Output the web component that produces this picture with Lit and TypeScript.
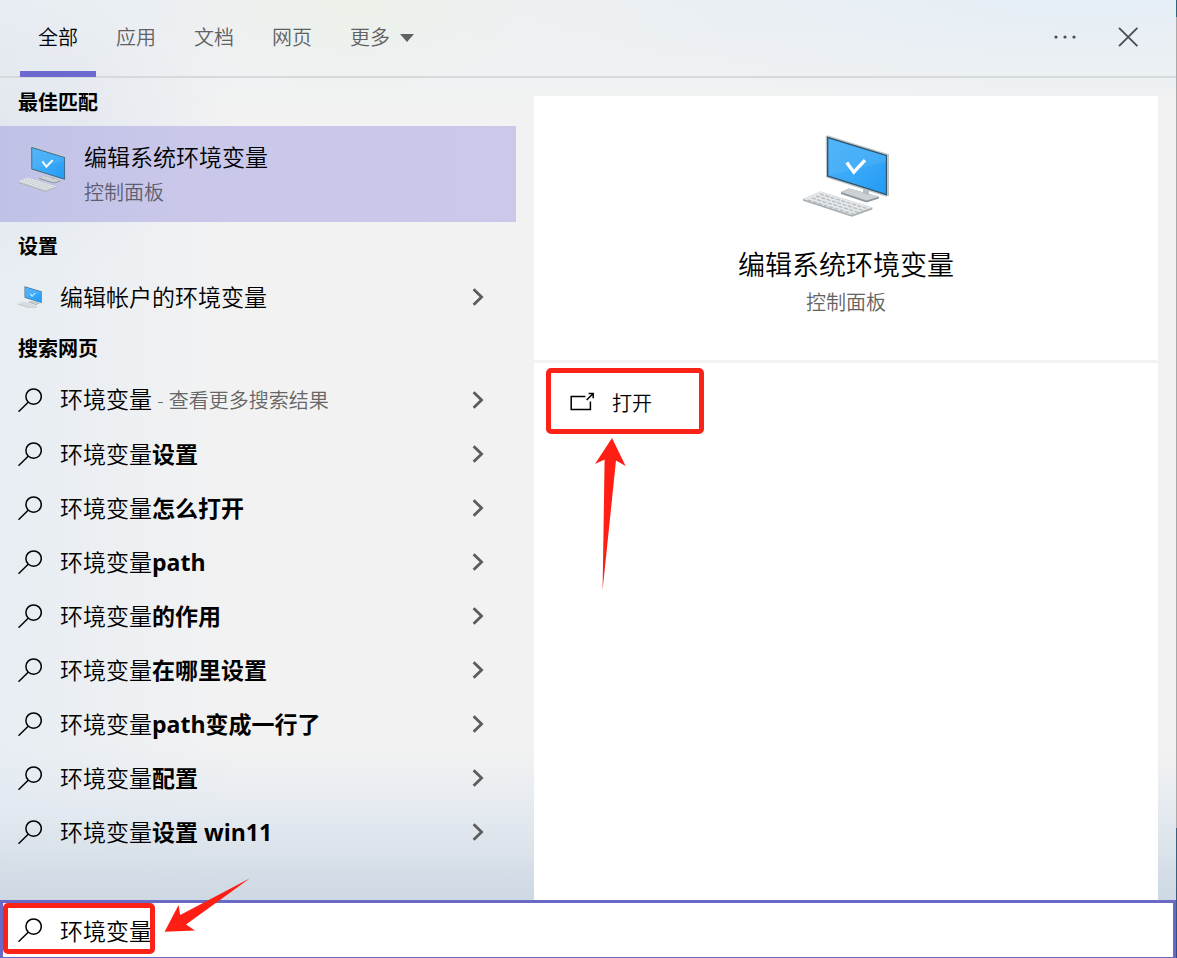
import { LitElement, html, css, svg, nothing } from "lit";
import { customElement, property, state } from "lit/decorators.js";

const magnifier = html`<svg class="magnifier" viewBox="0 0 24 24" aria-hidden="true">
  <circle cx="15.6" cy="8.6" r="7.7" />
  <path d="M10.2 14.2L.5 23.7" />
</svg>`;

const chevron = html`<svg class="chevron" viewBox="0 0 12 18" aria-hidden="true">
  <path d="M1.6 1.2L9.6 9L1.6 16.8" />
</svg>`;

@customElement("computer-icon")
class ComputerIcon extends LitElement {
  static styles = css`
    :host { display: block; }
    svg { display: block; width: 100%; height: auto; }
  `;
  render() {
    const keys = [];
    for (let row = 0; row < 4; row++) {
      const x = 17 - row * 4.1;
      const y = 59 + row * 2;
      keys.push(svg`<path d="M${x} ${y}l48.5 15" stroke="#b2b8bc" stroke-width="1.2" stroke-dasharray="4 1.6" />`);
    }
    return html`<svg viewBox="0 0 86 82" aria-hidden="true">
      <defs>
        <linearGradient id="glass" x1="0" y1="0" x2="1" y2="1">
          <stop offset="0" stop-color="#45b0f8" />
          <stop offset=".55" stop-color="#38a8f8" />
          <stop offset="1" stop-color="#229af4" />
        </linearGradient>
      </defs>
      <path d="M38 57L46 53.4L76 61.8V63.4L63.5 67.4L38 59Z" fill="#8e979d" />
      <path d="M38 57L46 53.4L76 61.8L63.5 65.6Z" fill="#cbd1d5" />
      <path d="M60 52L66 54V60L60 58.5Z" fill="#b7bec3" />
      <path d="M22.7 1.2L24.4 .2L86 19.2V61L82.8 61.4L23 42.6Z" fill="#bcc5ca" />
      <path d="M24 1.6L84 20V60.4L24 41.6Z" fill="#33566d" />
      <path d="M25.4 3.4L82.8 21V58.8L25.4 40.6Z" fill="url(#glass)" />
      <path d="M25.4 3.4L82.8 21V27L25.4 40.6Z" fill="#fff" opacity=".07" />
      <path d="M43.8 27.6L50.8 37.2L62 25.2" fill="none" stroke="#fff" stroke-width="3.4" />
      <path d="M0 64L17.4 56.4L69.4 72.6V74.4L48.8 81.8L0 65.8Z" fill="#a9aeb2" />
      <path d="M0 64L17.4 56.4L69.4 72.6L48.8 80Z" fill="#e4e7e9" />
      <g fill="none">${keys}</g>
    </svg>`;
  }
}

@customElement("result-row")
class ResultRow extends LitElement {
  @property() base = "";
  @property() bold = "";
  @property() hint = "";
  @property() icon = "search";

  static styles = css`
    :host { display: block; }
    .row {
      display: flex;
      align-items: center;
      gap: 18px;
      width: 100%;
      height: 54px;
      padding: 0 32px 0 18px;
      border: 0;
      background: none;
      color: #000;
      font: inherit;
      text-align: left;
      cursor: pointer;
    }
    .row:hover { background: rgba(120, 120, 200, 0.1); }
    .with-hint { height: 55px; }
    .label {
      flex: 1;
      min-width: 0;
      font-size: 23px;
      line-height: 32px;
      white-space: nowrap;
      overflow: hidden;
      text-overflow: ellipsis;
    }
    .bold { font-weight: 700; }
    .hint { font-size: 20px; color: #666; }
    .device { width: 24px; flex: none; }
    .magnifier { width: 24px; height: 24px; flex: none; fill: none; stroke: #000; stroke-width: 1.5; }
    .chevron { width: 12px; height: 18px; flex: none; fill: none; stroke: #5c5c5c; stroke-width: 2.8; }
  `;

  render() {
    return html`<button class="row ${this.hint ? "with-hint" : ""}">
      ${this.icon === "computer" ? html`<computer-icon class="device"></computer-icon>` : magnifier}
      <span class="label">${this.base}${this.bold
        ? html`<b class="bold">${this.bold}</b>`
        : nothing}${this.hint ? html`<span class="hint"> - ${this.hint}</span>` : nothing}</span>
      ${chevron}
    </button>`;
  }
}

@customElement("app-root")
class AppRoot extends LitElement {
  @state() private tab = "全部";
  @state() private query = "环境变量";

  private tabs = ["全部", "应用", "文档", "网页", "更多"];
  private suggestions = [
    { bold: "", hint: "查看更多搜索结果" },
    { bold: "设置" },
    { bold: "怎么打开" },
    { bold: "path" },
    { bold: "的作用" },
    { bold: "在哪里设置" },
    { bold: "path变成一行了" },
    { bold: "配置" },
    { bold: "设置 win11" },
  ];

  static styles = css`
    :host {
      display: block;
      box-sizing: border-box;
      min-height: 100vh;
      padding-right: 1px;
      background: linear-gradient(#2c6580 0 17px, #a9a9a9 17px 828px, #38607c 828px 880px, #2a4a8c);
      font-family: "Open Sans", "Noto Sans CJK SC", sans-serif;
      font-weight: 350;
      color: #000;
    }
    *, *::before { box-sizing: border-box; }
    button { font-family: inherit; font-weight: inherit; }
    .window {
      display: grid;
      grid-template-rows: auto 1fr auto;
      min-height: 100vh;
      background:
        linear-gradient(to bottom, rgba(226, 232, 240, 0) 78%, rgba(226, 232, 240, 0.85) 85%, #cdd8e2 94%),
        radial-gradient(ellipse 200px 90px at 30% 0, rgba(236, 242, 232, 0.8), rgba(236, 242, 232, 0)),
        radial-gradient(ellipse 560px 110px at 92% 0, #e5eef6, rgba(229, 238, 246, 0)),
        radial-gradient(ellipse 220px 140px at 0 14%, #e3e6ee, rgba(227, 230, 238, 0)),
        linear-gradient(to right, #e7edf3, rgba(241, 242, 243, 0) 20%),
        linear-gradient(#edf0f2, #f2f2f2 14%);
    }
    .header {
      display: flex;
      justify-content: space-between;
      height: 78px;
      padding: 0 26px 0 20px;
      border-bottom: 2px solid #d6dadb;
    }
    .tabs { display: flex; gap: 2px; }
    .tab {
      position: relative;
      display: flex;
      align-items: center;
      gap: 10px;
      padding: 0 18px;
      border: 0;
      background: none;
      color: #5f6163;
      font-size: 20px;
      line-height: 28px;
      cursor: pointer;
    }
    .selected { color: #000; }
    .selected::before {
      content: "";
      position: absolute;
      left: 0;
      right: 0;
      bottom: -1px;
      height: 6px;
      background: #6b69cf;
    }
    .caret { width: 14px; height: 8px; fill: #5f6163; }
    .tools { display: flex; align-items: center; gap: 29px; padding-bottom: 2px; }
    .tool { display: flex; padding: 0; border: 0; background: none; cursor: pointer; }
    .dots { width: 24px; height: 24px; fill: #4a4d50; }
    .cross { width: 44px; height: 24px; fill: none; stroke: #4a4d50; stroke-width: 1.8; }

    .content {
      display: grid;
      grid-template-columns: 43fr 52fr;
      gap: 18px;
      padding-right: 18px;
    }
    .results { min-width: 0; }
    .heading {
      margin: 0;
      padding: 11px 18px 9px;
      font-size: 20px;
      line-height: 28px;
      font-weight: 700;
    }
    .best {
      display: flex;
      align-items: center;
      gap: 18px;
      width: 100%;
      height: 96px;
      padding: 2px 18px 0;
      border: 0;
      background: linear-gradient(to right, #c0c1e7, #c9c8ea 35%, #cbc9ea);
      text-align: left;
      cursor: pointer;
    }
    .best-icon { width: 48px; padding-bottom: 12px; }
    .best-text { display: flex; flex-direction: column; }
    .best-title { font-size: 23px; line-height: 35px; }
    .sub { margin: 0; font-size: 20px; line-height: 36px; color: #636363; }
    .best .sub { color: #5f5e70; }

    .details { margin-top: 18px; background: #fff; min-width: 0; }
    .summary {
      display: flex;
      flex-direction: column;
      align-items: center;
      padding: 39px 20px;
      border-bottom: 3px solid #f2f2f2;
    }
    .summary-icon { width: 86px; margin-bottom: 28px; }
    .name { margin: 0; font-size: 27px; line-height: 40px; font-weight: inherit; }
    .actions { padding: 8px 12px; }
    .action { position: relative; width: 158px; }
    .open {
      display: flex;
      align-items: center;
      gap: 18px;
      width: 100%;
      height: 66px;
      padding: 0 24px;
      border: 0;
      background: none;
      color: #000;
      font-size: 20px;
      line-height: 28px;
      cursor: pointer;
    }
    .open-icon { width: 24px; height: 24px; flex: none; fill: none; stroke: #000; stroke-width: 1.5; }

    .search {
      position: relative;
      display: flex;
      align-items: center;
      gap: 18px;
      height: 58px;
      padding: 0 15px;
      border: solid #6b69c6;
      border-width: 3px 3px 1px;
      background: #fff;
    }
    .field {
      flex: 1;
      min-width: 0;
      height: 40px;
      padding: 0;
      border: 0;
      outline: 0;
      background: none;
      color: #000;
      font-family: inherit;
      font-weight: inherit;
      font-size: 23px;
    }
    .magnifier { width: 24px; height: 24px; flex: none; fill: none; stroke: #000; stroke-width: 1.5; }

    .frame {
      position: absolute;
      border: 5px solid #fb2318;
      border-radius: 5px;
      pointer-events: none;
    }
    .frame-open { inset: -3px 0 3px 0; }
    .frame-search { left: 0; top: 0; width: 152px; height: 51px; }
    .arrow { position: absolute; fill: #ff1e14; pointer-events: none; }
    .arrow-open { left: 48px; top: 67px; width: 34px; height: 153px; }
    .arrow-search { left: 161px; top: -25px; width: 87px; height: 54px; }
  `;

  private onInput(e: Event) {
    this.query = (e.target as HTMLInputElement).value;
  }

  render() {
    return html`<div class="window">
      <header class="header">
        <nav class="tabs">
          ${this.tabs.map(
            (name) => html`<button class="tab ${name === this.tab ? "selected" : ""}" @click=${() => (this.tab = name)}>
              ${name}${name === "更多"
                ? html`<svg class="caret" viewBox="0 0 14 8" aria-hidden="true"><path d="M0 0H14L7 8Z" /></svg>`
                : nothing}
            </button>`
          )}
        </nav>
        <div class="tools">
          <button class="tool" aria-label="选项">
            <svg class="dots" viewBox="0 0 24 24">
              <circle cx="3" cy="12" r="1.6" /><circle cx="12" cy="12" r="1.6" /><circle cx="21" cy="12" r="1.6" />
            </svg>
          </button>
          <button class="tool" aria-label="关闭">
            <svg class="cross" viewBox="0 0 44 24"><path d="M13 2.8L31.4 21.2M31.4 2.8L13 21.2" /></svg>
          </button>
        </div>
      </header>

      <main class="content">
        <section class="results">
          <h2 class="heading">最佳匹配</h2>
          <button class="best">
            <computer-icon class="best-icon"></computer-icon>
            <span class="best-text">
              <span class="best-title">编辑系统环境变量</span>
              <span class="sub">控制面板</span>
            </span>
          </button>
          <h2 class="heading">设置</h2>
          <result-row icon="computer" base="编辑帐户的环境变量"></result-row>
          <h2 class="heading">搜索网页</h2>
          ${this.suggestions.map(
            (s) => html`<result-row base="环境变量" .bold=${s.bold} .hint=${s.hint ?? ""}></result-row>`
          )}
        </section>

        <section class="details">
          <div class="summary">
            <computer-icon class="summary-icon"></computer-icon>
            <h1 class="name">编辑系统环境变量</h1>
            <p class="sub">控制面板</p>
          </div>
          <div class="actions">
            <div class="action">
              <button class="open">
                <svg class="open-icon" viewBox="0 0 24 24" aria-hidden="true">
                  <path d="M15.4 4.4H1.2V17.4H20.4V9.4M16.6 8L23 1.8M18.6 1.6H23.2V6.2" />
                </svg>
                打开
              </button>
              <div class="frame frame-open"></div>
              <svg class="arrow arrow-open" viewBox="0 0 34 153" aria-hidden="true">
                <path d="M18 0L31.6 28L22 22.4L8.6 152L10.6 21.6L1 26Z" />
              </svg>
            </div>
          </div>
        </section>
      </main>

      <label class="search">
        ${magnifier}
        <input class="field" type="text" aria-label="搜索" .value=${this.query} @input=${this.onInput} />
        <span class="frame frame-search"></span>
        <svg class="arrow arrow-search" viewBox="0 0 87 54" aria-hidden="true">
          <path d="M86 .3L22 46.6L31 52.6L.6 53.8L14.6 27L16.2 37Z" />
        </svg>
      </label>
    </div>`;
  }
}
